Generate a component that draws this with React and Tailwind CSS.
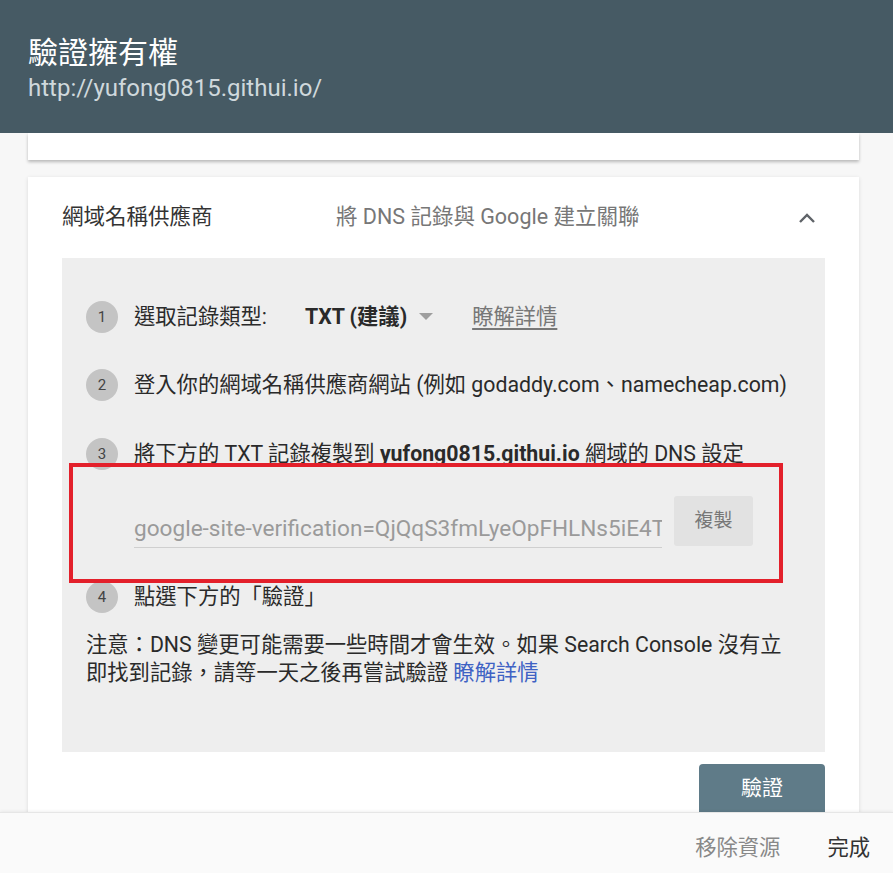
const font = "font-['Roboto','Noto_Sans_CJK_TC',sans-serif]";

function StepNum({ n }) {
  return (
    <div className="w-[32px] h-[32px] rounded-full bg-[#c4c4c4] flex items-center justify-center text-[15px] text-[#444] shrink-0">
      {n}
    </div>
  );
}

function ChevronUp() {
  return (
    <svg width="20" height="14" viewBox="0 0 20 14" className="text-[#5f6368]">
      <path d="M3 11 L10 4 L17 11" fill="none" stroke="currentColor" strokeWidth="2.4" />
    </svg>
  );
}

export default function App() {
  return (
    <div className={`${font} w-[893px] h-[873px] flex flex-col bg-[#f7f7f7] overflow-hidden`}>
      {/* Header */}
      <header className="h-[133px] shrink-0 bg-[#465a64] px-[28px] pt-[34px] relative z-10">
        <h1 className="text-[30px] leading-[38px] text-white">驗證擁有權</h1>
        <p className="text-[24px] leading-[30px] text-[#cfd8dc] mt-[1px]">http://yufong0815.githui.io/</p>
      </header>

      {/* Content */}
      <main className="flex-1 overflow-hidden pl-[28px] pr-[34px]">
        <div className="h-[27px] bg-white shadow-[0_2px_3px_rgba(0,0,0,0.25)]" />

        <section className="mt-[17px] bg-white shadow-[0_1px_4px_rgba(0,0,0,0.12)] px-[34px] pb-[24px]">
          <div className="h-[81px] flex items-center">
            <span className="w-[274px] text-[21.5px] text-[#333]">網域名稱供應商</span>
            <span className="flex-1 text-[21.5px] text-[#777]">將 DNS 記錄與 Google 建立關聯</span>
            <span className="mr-[8px]"><ChevronUp /></span>
          </div>

          <div className="relative bg-[#eeeeee] h-[494px] pl-[24px] pr-[10px] pt-[41px] text-[21.3px] text-[#2a2a2a]">
            <div className="flex items-center gap-[16px] h-[36px]">
              <StepNum n="1" />
              <span>選取記錄類型:</span>
              <span className="ml-[22px] font-bold">TXT (建議)</span>
              <svg width="16" height="8" viewBox="0 0 16 8" className="ml-[-5px]">
                <path d="M1 0 L15 0 L8 7 Z" fill="#9e9e9e" />
              </svg>
              <span className="ml-[22px] text-[#777] underline underline-offset-4">瞭解詳情</span>
            </div>

            <div className="flex items-center gap-[16px] h-[36px] mt-[32px]">
              <StepNum n="2" />
              <span>登入你的網域名稱供應商網站 (例如 godaddy.com、namecheap.com)</span>
            </div>

            <div className="flex items-center gap-[16px] h-[36px] mt-[33px]">
              <StepNum n="3" />
              <span>
                將下方的 TXT 記錄複製到 <b>yufong0815.githui.io</b> 網域的 DNS 設定
              </span>
            </div>

            <div className="flex items-end ml-[48px] mt-[24px] h-[52px]">
              <div className="w-[528px] overflow-hidden whitespace-nowrap border-b border-[#cfcfcf] pb-[1px] text-[22.6px] text-[#9a9a9a]">
                google-site-verification=QjQqS3fmLyeOpFHLNs5iE4T8aKx2
              </div>
              <button className="ml-[12px] w-[79px] h-[50px] self-start bg-[#e2e2e2] rounded-[3px] text-[19px] text-[#777]">
                複製
              </button>
            </div>

            <div className="flex items-center gap-[16px] h-[36px] mt-[31px]">
              <StepNum n="4" />
              <span>點選下方的「驗證」</span>
            </div>

            <p className="mt-[16px] leading-[28px]">
              注意：DNS 變更可能需要一些時間才會生效。如果 Search Console 沒有立
              <br />
              即找到記錄，請等一天之後再嘗試驗證 <span className="text-[#3f62c4]">瞭解詳情</span>
            </p>

            {/* annotation box */}
            <div className="absolute left-[7px] top-[205px] w-[714px] h-[120px] border-[4px] border-[#e3202b]" />
          </div>

          <div className="flex justify-end mt-[12px]">
            <button className="w-[126px] h-[52px] bg-[#5f7b88] rounded-[4px] text-white text-[21px] pb-[3px]">驗證</button>
          </div>
        </section>
      </main>

      {/* Footer */}
      <footer className="h-[61px] shrink-0 bg-[#fafafa] border-t border-[#e6e6e6] shadow-[0_-1px_3px_rgba(0,0,0,0.06)] flex items-center justify-end pt-[10px] pr-[23px] gap-[47px] text-[21.3px] relative z-10">
        <span className="text-[#888]">移除資源</span>
        <span className="text-[#333]">完成</span>
      </footer>
    </div>
  );
}
